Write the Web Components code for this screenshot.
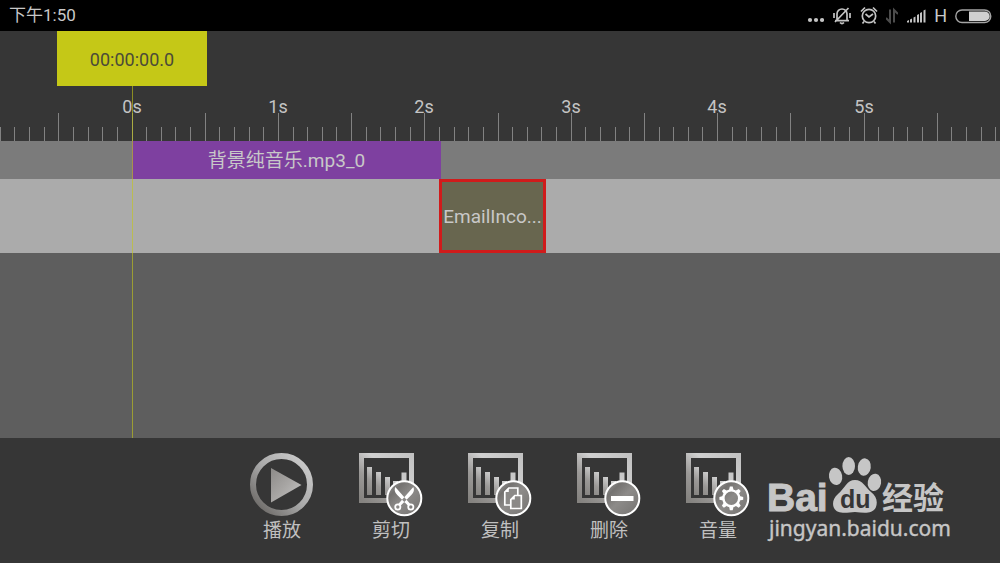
<!DOCTYPE html>
<html lang="zh-CN">
<head>
<meta charset="utf-8">
<meta name="viewport" content="width=device-width, initial-scale=1">
<title>音频编辑</title>
<style>
  body { margin: 0; background: #363636; font-family: Roboto, "Noto Sans CJK SC", sans-serif; color: #c4c4c4; }
</style>
</head>
<body>
<editor-app></editor-app>

<template id="status-bar">
  <style>
    :host { display: flex; align-items: center; gap: 8px; height: 31px; padding: 0 8px 0 9px; background: #000; font-size: 17px; line-height: 31px; color: #c8c8c8; }
    time { margin-right: auto; }
    svg { display: block; flex: none; }
    .net { font-size: 18px; }
  </style>
  <time>下午1:50</time>
  <svg width="17" height="20" viewBox="0 0 17 20" fill="#c4c4c4"><circle cx="3" cy="14" r="2.100"/><circle cx="9" cy="14" r="2.100"/><circle cx="15" cy="14" r="2.100"/></svg>
  <svg width="20" height="20" viewBox="0 0 20 20" fill="none" stroke="#c4c4c4" stroke-width="1.700"><path d="M5 14V8a5 5 0 0 1 10 0v6M3 14.700h14M8 16.500q2 2 4 0M16.500 2L3 16M2 7v5M18 7v5"/></svg>
  <svg width="18" height="20" viewBox="0 0 18 20" fill="none" stroke="#c4c4c4" stroke-width="1.700"><circle cx="9" cy="10" r="6.700"/><path d="M1 5.500l4-4M17 5.500l-4-4M5.500 8L9 11l4-3M4 15.500l-1.500 2M14 15.500l1.500 2"/></svg>
  <svg width="12" height="20" viewBox="1 0 12 20" fill="none" stroke="#4c4c4c" stroke-width="2"><path d="M5 3.500v12.500L1 12M9 16.500V4l4 4"/></svg>
  <svg width="20" height="20" viewBox="0 0 20 20" fill="#c4c4c4"><path d="M1 16.500v-1.500l2-1v2.500zM4 16.500v-3l2-1v4zM7.500 16.500v-5l2-1v6zM11 16.500v-7.500l2-1v8.500zM14 16.500v-9.500l2-1v10.500zM17.500 16.500v-12l2-1v13z"/></svg>
  <span class="net">H</span>
  <svg width="37" height="20" viewBox="0 0 37 20"><rect x=".8" y="4" width="35" height="12.500" rx="6.200" fill="none" stroke="#a5a5a5" stroke-width="1.400"/><path d="M14 5.500h16a4.700 4.700 0 0 1 0 9.500H14z" fill="#d0d0d0"/></svg>
</template>

<template id="time-ruler">
  <style>
    :host { display: block; height: 55px; overflow: hidden; }
    svg { display: block; width: 100%; height: 55px; }
    text { font-size: 18px; fill: #c4c4c4; text-anchor: middle; }
    rect { fill: #828282; }
  </style>
  <svg></svg>
</template>

<template id="audio-clip">
  <style>
    :host { display: flex; flex: none; }
    button { flex: 1; min-width: 0; margin: 0; padding: 0 0 4px; border: 0; background: #7e40a0; color: #c8c8c8; font: inherit; font-size: 19px; white-space: nowrap; overflow: hidden; }
    :host([selected]) button { padding: 0; border: 3px solid #d01b1b; background: #68664f; }
  </style>
  <button type="button"><slot></slot></button>
</template>

<template id="time-line">
  <style>
    :host { display: flex; flex-direction: column; position: relative; overflow: hidden; background: #5e5e5e; }
    .head { background: #363636; }
    output { display: block; box-sizing: border-box; width: 150px; height: 55px; margin-left: 57px; background: #c5c817; color: #4b4b38; font-size: 18px; line-height: 57px; text-align: center; }
    .track { display: flex; height: 38px; background: #7b7b7b; }
    .track.effects { height: 74px; background: #ababab; }
    .music audio-clip { margin-left: 132px; width: 309px; }
    .effects audio-clip { margin-left: 439px; width: 107px; }
    .playhead { position: absolute; left: 132px; top: 55px; bottom: 0; width: 1px; background: #c5c817; opacity: .6; }
  </style>
  <div class="head"><output>00:00:00.0</output><time-ruler></time-ruler></div>
  <div class="track music"><audio-clip>背景纯音乐.mp3_0</audio-clip></div>
  <div class="track effects"><audio-clip selected>EmailInco...</audio-clip></div>
  <div class="playhead"></div>
</template>

<template id="tool-button">
  <style>
    :host { display: block; }
    button { display: flex; flex-direction: column; align-items: center; width: 100%; margin: 0; padding: 0; border: 0; background: none; color: #c0c0c0; font: inherit; font-size: 19px; line-height: 28px; }
    svg { display: block; width: 64px; height: 64px; }
  </style>
  <button type="button"><svg viewBox="0 0 64 64" aria-hidden="true">
    <defs>
      <linearGradient id="g" x1="0" y1="1" x2="1" y2="0"><stop offset="0" stop-color="#858380"/><stop offset=".3" stop-color="#9b9997"/><stop offset=".6" stop-color="#d0d0d0"/><stop offset="1" stop-color="#c2c2c2"/></linearGradient>
      <linearGradient id="p" x1="0" y1="1" x2="1" y2="0"><stop offset="0" stop-color="#625f5c"/><stop offset=".5" stop-color="#aaa"/><stop offset="1" stop-color="#d0d0d0"/></linearGradient>
      <linearGradient id="t" x1="0" y1="0" x2="1" y2="1"><stop offset="0" stop-color="#8c8a88"/><stop offset=".5" stop-color="#a8a6a4"/><stop offset="1" stop-color="#c8c8c8"/></linearGradient>
      <linearGradient id="b" x1="0" y1="0" x2="1" y2="1"><stop offset="0" stop-color="#a6a6a6"/><stop offset=".25" stop-color="#747270"/><stop offset=".5" stop-color="#8d8b89"/><stop offset="1" stop-color="#73716f"/></linearGradient>
    </defs><g class="art"></g></svg><span><slot></slot></span></button>
</template>

<template id="tool-bar">
  <style>
    :host { display: block; background: #363636; }
    nav { display: grid; grid-template-columns: repeat(5, minmax(0, 109px)); justify-content: center; min-height: 110px; padding-top: 15px; }
  </style>
  <nav aria-label="编辑工具">
    <tool-button icon="play">播放</tool-button>
    <tool-button icon="cut">剪切</tool-button>
    <tool-button icon="copy">复制</tool-button>
    <tool-button icon="remove">删除</tool-button>
    <tool-button icon="volume">音量</tool-button>
  </nav>
</template>

<template id="site-mark">
  <style>
    :host { display: block; }
    svg { display: block; }
    text { fill: #c6c6c6; }
    .bai { font: bold 39px "Liberation Sans", sans-serif; stroke: #c6c6c6; stroke-width: 1px; }
    .du { font: bold 25px "Liberation Sans", sans-serif; fill: #363636; }
    .cn { font: bold 31px "Noto Sans CJK SC", sans-serif; }
    .url { font: 21px "Noto Sans", sans-serif; stroke: #c6c6c6; stroke-width: .4px; }
  </style>
  <svg width="188" height="92" viewBox="0 0 188 92">
    <text class="bai" x="2" y="56">Bai</text>
    <g fill="#c6c6c6">
      <ellipse cx="70.500" cy="21.500" rx="6.600" ry="8.700" transform="rotate(-10 70 21)"/>
      <ellipse cx="83.700" cy="11" rx="6.300" ry="9"/>
      <ellipse cx="99.300" cy="12" rx="6.500" ry="8.700" transform="rotate(8 99 12)"/>
      <ellipse cx="109.500" cy="27.300" rx="6.700" ry="8.700" transform="rotate(10 109 27)"/>
      <path d="M90 25C82 25 80 33 73 39C68 43 67 49 69 53C72 59 80 58 90 57C100 58 108 59 111 52C113 46 111 41 106 37C100 32 98 25 90 25Z"/>
    </g>
    <text class="du" x="75" y="53">du</text>
    <text class="cn" x="117" y="54">经验</text>
    <text class="url" x="4" y="81">jingyan.baidu.com</text>
  </svg>
</template>

<template id="editor-app">
  <style>
    :host { display: flex; flex-direction: column; position: relative; min-height: 100vh; }
    time-line { flex: 1; }
    site-mark { position: absolute; right: 47px; bottom: 16px; }
  </style>
  <status-bar></status-bar>
  <time-line></time-line>
  <tool-bar></tool-bar>
  <site-mark></site-mark>
</template>

<script>
class View extends HTMLElement {
  constructor() {
    super();
    this.attachShadow({ mode: "open" })
      .append(document.getElementById(this.localName).content.cloneNode(true));
  }
}

const chart = '<path d="M2.500 2.500H52.500V47.500H2.500Z" fill="none" stroke="url(#g)" stroke-width="5"/>' +
  '<path d="M8 14h5v28H8zM17 19h5v23h-5zM26 24h5v18h-5zM34 28h5v14h-5zM42.500 19.500h5v22h-5z" fill="url(#g)"/>' +
  '<circle cx="45.300" cy="45.300" r="17" fill="url(#b)" stroke="#fff" stroke-width="2"/>';
const gearTeeth = Array.from({ length: 8 }, (_, i) =>
  `<path d="M43 37l.9-3.600h2.800L47.600 37z" transform="rotate(${i * 45} 45.300 45.300)" fill="#fff"/>`).join("");
const art = {
  play: '<circle cx="31.500" cy="31.500" r="28.500" fill="none" stroke="url(#p)" stroke-width="6"/><path d="M21 15L51.500 32L21 49.500Z" fill="url(#t)"/>',
  cut: chart + '<g transform="translate(-.7 0)"><path d="M37 34Q35 38 39 42L50 53L52 51ZM55 34Q57 38 53 42L42 53L40 51Z" fill="#fff"/><g fill="none" stroke="#fff" stroke-width="1.800"><circle cx="39.500" cy="54" r="2.600"/><circle cx="52.500" cy="54" r="2.600"/></g></g>',
  copy: chart + '<g transform="translate(-.7 0)"><g fill="#8b8987" stroke="#fff" stroke-width="1.700"><path d="M41.500 35H50.500V52H37.500V39Z"/><path d="M47.500 42.500H54V55.500H43.500V46.500Z"/></g><path d="M41.500 35v4h-4zM47.500 42.500v4h-4z" fill="#fff"/></g>',
  remove: chart + '<path d="M34 43h22.500v5H34z" fill="#fff"/>',
  volume: chart + gearTeeth + '<circle cx="45.300" cy="45.300" r="7.900" fill="none" stroke="#fff" stroke-width="2.400"/>'
};

customElements.define("status-bar", class extends View {});
customElements.define("audio-clip", class extends View {});

customElements.define("time-ruler", class extends View {
  connectedCallback() {
    this.draw();
    addEventListener("resize", () => this.draw());
  }
  draw() {
    const origin = 132, tenSeconds = 1464;
    const width = this.clientWidth || innerWidth;
    let marks = "";
    for (let i = -10; ; i++) {
      const x = origin + Math.floor(i * tenSeconds / 100);
      if (x > width) break;
      const tall = i % 5 === 0;
      marks += `<rect x="${x}" y="${tall ? 27 : 41}" width="1" height="${tall ? 28 : 14}"/>`;
      if (i % 10 === 0) marks += `<text x="${x}" y="27">${i / 10}s</text>`;
    }
    this.shadowRoot.querySelector("svg").innerHTML = marks;
  }
});

customElements.define("time-line", class extends View {});
customElements.define("tool-button", class extends View {
  connectedCallback() {
    this.shadowRoot.querySelector(".art").innerHTML = art[this.getAttribute("icon")];
  }
});
customElements.define("tool-bar", class extends View {});
customElements.define("site-mark", class extends View {});
customElements.define("editor-app", class extends View {});
</script>
</body>
</html>
